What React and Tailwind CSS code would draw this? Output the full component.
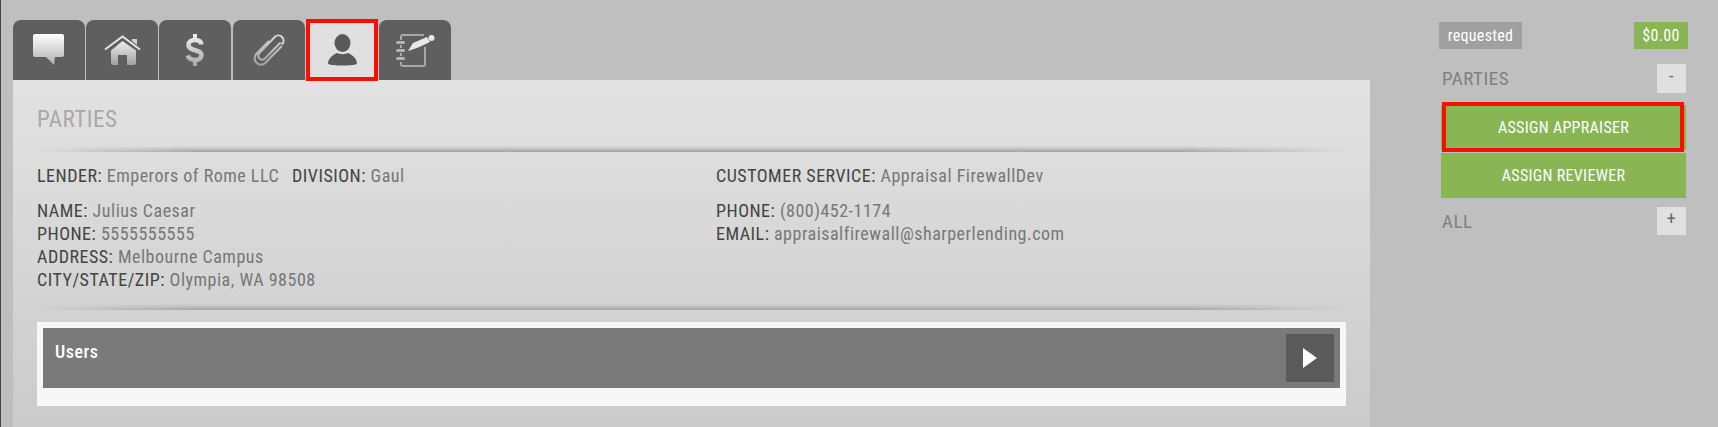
function Bubble() {
  return (
    <svg width="32" height="32" viewBox="0 0 32 32">
      <defs>
        <linearGradient id="bubble" x1="0" y1="0" x2="0" y2="1">
          <stop offset="0" stopColor="#ffffff" />
          <stop offset="1" stopColor="#b0b0b0" />
        </linearGradient>
      </defs>
      <path d="M2 0h27a2 2 0 0 1 2 2v19a2 2 0 0 1-2 2h-7l-1 8-8-8H2a2 2 0 0 1-2-2V2a2 2 0 0 1 2-2z" fill="url(#bubble)" />
    </svg>
  );
}

function House() {
  return (
    <svg width="37" height="30" viewBox="0 0 37 30">
      <defs>
        <linearGradient id="house" x1="0" y1="0" x2="0" y2="1">
          <stop offset="0" stopColor="#f0f0f0" />
          <stop offset="1" stopColor="#a0a0a0" />
        </linearGradient>
      </defs>
      <path d="M1 14.500 18.500 1.500 36 14.500" fill="none" stroke="#e4e4e4" strokeWidth="2" />
      <path d="M28 4h5v6l-5-4z" fill="#d0d0d0" />
      <path d="M18.500 6 32 15.500V28a2 2 0 0 1-2 2h-7V20h-9v10H9a2 2 0 0 1-2-2V15.500z" fill="url(#house)" />
    </svg>
  );
}

function Dollar() {
  return (
    <svg width="18" height="32" viewBox="0 0 18 32">
      <defs>
        <linearGradient id="dollar" gradientUnits="userSpaceOnUse" x1="0" y1="0" x2="0" y2="32">
          <stop offset="0" stopColor="#f0f0f0" />
          <stop offset="1" stopColor="#a8a8a8" />
        </linearGradient>
      </defs>
      <path d="M15.500 10.500C15 7.500 12.500 6 9 6 5 6 2.500 8 2.500 11c0 6.500 13 4 13 10 0 3-2.700 5-6.500 5-3.700 0-6.500-1.700-7-4.500" fill="none" stroke="url(#dollar)" strokeWidth="4.500" />
      <path d="M7 0h4v6H7zM7 26h4v6H7z" fill="url(#dollar)" />
    </svg>
  );
}

function Clip() {
  return (
    <svg width="32" height="34" viewBox="0 0 32 34">
      <defs>
        <linearGradient id="clip" gradientUnits="userSpaceOnUse" x1="0" y1="0" x2="0" y2="34">
          <stop offset="0" stopColor="#d8d8d8" />
          <stop offset="1" stopColor="#a0a0a0" />
        </linearGradient>
      </defs>
      <path
        d="M15.500 8.500 3.500 20.800c-2.500 2.700-2.500 6.700 0 9 2.500 2.500 6.500 2.500 9 0L28.300 13.500M29 4a5 5 0 0 0-7-.200L6.500 20c-1.500 1.700-1.500 4 0 5.500s4 1.500 5.500 0L27 10"
        fill="none"
        stroke="url(#clip)"
        strokeWidth="2"
        strokeLinecap="round"
      />
      <path d="M29 4c2 2 2 5 .2 7" fill="none" stroke="#d8d8d8" strokeWidth="2" strokeLinecap="round" />
    </svg>
  );
}

function Person() {
  return (
    <svg width="29" height="32" viewBox="0 0 29 32">
      <ellipse cx="14.500" cy="9" rx="8" ry="9" fill="#595959" />
      <path d="M0 30c0-6 5-9 9-11 3 1.500 8 1.500 11 0 4 2 9 5 9 11-5 2-24 2-29 0z" fill="#595959" />
    </svg>
  );
}

function Notebook() {
  return (
    <svg width="39" height="33" viewBox="0 0 39 33">
      <path d="M5 6V3a2 2 0 0 1 2-2h21M29 13v17a2 2 0 0 1-2 2H7a2 2 0 0 1-2-2v-2M5 11v3M5 19v3" fill="none" stroke="#a8a8a8" strokeWidth="2" />
      <path d="M1.500 8.500h6M1.500 16.500h6M1.500 24.500h6" stroke="#b4b4b4" strokeWidth="3" strokeLinecap="round" />
      <path d="M12 17l5-8 14-6 3 5-13 6z" fill="#e8e8e8" />
      <circle cx="35.500" cy="4" r="3" fill="#e8e8e8" />
    </svg>
  );
}

function Tab({ className = '', children }) {
  return (
    <div className={`w-[72px] h-[60px] bg-[#5f5f5f] rounded-t-lg flex items-center justify-center ${className}`}>
      {children}
    </div>
  );
}

function Row({ label, value }) {
  return (
    <div>
      <span className="text-[#444444]">{label}: </span>
      <span className="text-[#777777]">{value}</span>
    </div>
  );
}

function Divider() {
  return (
    <div className="h-[6px] bg-gradient-to-b from-transparent to-[#a4a4a4] [mask-image:linear-gradient(to_right,transparent,black_12%,black_88%,transparent)]" />
  );
}

function SideHead({ title, sign, className = '' }) {
  return (
    <div className={`flex items-center justify-between pl-[3px] pr-[2px] ${className}`}>
      <span className="pt-[2px] text-[19px] text-[#808080]">{title}</span>
      <span className="w-[29px] h-full bg-[#e0e0e0] text-[#666666] text-[18px] leading-[24px] text-center">{sign}</span>
    </div>
  );
}

export default function App() {
  return (
    <div className="w-[1718px] h-[427px] overflow-hidden bg-[#bfbfbf] flex border-l border-[#444444] text-[18px] tracking-[0.5px] [font-family:Roboto,sans-serif] [font-stretch:75%]">
      <div className="w-[1369px] shrink-0 pl-[12px] pt-[20px]">
        <div className="flex gap-px h-[60px]">
          <Tab><Bubble /></Tab>
          <Tab><House /></Tab>
          <Tab className="mr-px"><Dollar /></Tab>
          <Tab><Clip /></Tab>
          <div className="relative z-10 w-[72px] h-[62px] -mt-px border-[4px] border-[#fb0d00] bg-[#e0e0e0] flex items-center justify-center">
            <Person />
          </div>
          <Tab><Notebook /></Tab>
        </div>
        <div className="h-[347px] bg-gradient-to-b from-[#e2e2e2] to-[#cbcbcb] px-6">
          <div className="pt-[25px] text-[23px] leading-[30px] text-[#a8a8a8]">PARTIES</div>
          <div className="mt-[11px]"><Divider /></div>
          <div className="grid grid-cols-[679px_1fr] pt-[12px] leading-[23px]">
            <div>
              <div className="flex gap-[13px]">
                <Row label="LENDER" value="Emperors of Rome LLC" />
                <Row label="DIVISION" value="Gaul" />
              </div>
              <div className="mt-[12px]">
                <Row label="NAME" value="Julius Caesar" />
                <Row label="PHONE" value="5555555555" />
                <Row label="ADDRESS" value="Melbourne Campus" />
                <Row label="CITY/STATE/ZIP" value="Olympia, WA 98508" />
              </div>
            </div>
            <div>
              <Row label="CUSTOMER SERVICE" value="Appraisal FirewallDev" />
              <div className="mt-[12px]">
                <Row label="PHONE" value="(800)452-1174" />
                <Row label="EMAIL" value="appraisalfirewall@sharperlending.com" />
              </div>
            </div>
          </div>
          <div className="mt-[13px]"><Divider /></div>
          <div className="mt-[12px] bg-[#f7f7f7] p-[6px] pb-[18px]">
            <div className="h-[60px] bg-[#7a7a7a] pl-3 pr-[6px] pt-[6px] flex justify-between">
              <span className="mt-[6px] text-white font-medium leading-[24px]">Users</span>
              <div className="w-[48px] h-[48px] bg-[#5a5a5a] flex items-center justify-center">
                <svg width="14" height="20" viewBox="0 0 14 20"><path d="M0 0l14 10L0 20z" fill="#ffffff" /></svg>
              </div>
            </div>
          </div>
        </div>
      </div>
      <div className="flex-1 pl-[69px] pr-[30px] pt-[22px]">
        <div className="flex justify-between items-center text-white text-[16px] tracking-[0.3px]">
          <span className="h-[27px] w-[83px] bg-[#a0a0a0] flex items-center justify-center">requested</span>
          <span className="h-[27px] w-[54px] bg-[#8ab554] flex items-center justify-center">$0.00</span>
        </div>
        <SideHead title="PARTIES" sign="-" className="mt-[15px] h-[29px]" />
        <div className="mt-[12px] mx-[2px] flex flex-col gap-[3px] text-white text-[16px] tracking-[0.3px]">
          <div className="relative h-[45px] bg-[#8ab554] flex items-center justify-center">
            ASSIGN APPRAISER
            <div className="absolute left-[1px] right-[2px] -top-[3px] -bottom-[2px] border-[4px] border-[#fb0d00]" />
          </div>
          <div className="h-[45px] bg-[#8ab554] flex items-center justify-center">ASSIGN REVIEWER</div>
        </div>
        <SideHead title="ALL" sign="+" className="mt-[9px] h-[28px]" />
      </div>
    </div>
  );
}
